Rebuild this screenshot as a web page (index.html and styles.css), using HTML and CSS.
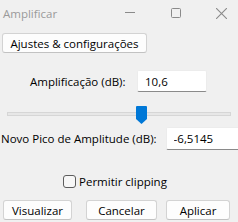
FILE: index.html
```html
<!DOCTYPE html>
<html lang="pt">
<head>
  <meta charset="UTF-8">
  <title>Amplificar</title>
  <link rel="stylesheet" href="styles.css">
</head>
<body>

  <div class="window">
    <div class="titlebar">
      <span class="title">Amplificar</span>
      <svg class="ctl ctl-min" viewBox="0 0 10 10"><path d="M0 5.5h10"/></svg>
      <svg class="ctl ctl-max" viewBox="0 0 10 10"><rect x="0.5" y="0.5" width="9" height="9" rx="1"/></svg>
      <svg class="ctl ctl-close" viewBox="0 0 10 10"><path d="M0 0l10 10M10 0L0 10"/></svg>
    </div>

    <div class="row-settings">
      <button class="btn btn-settings">Ajustes &amp; configurações</button>
    </div>

    <div class="row-amp">
      <label class="lbl">Amplificação (dB):</label>
      <input class="field field-amp" type="text" value="10,6">
    </div>

    <div class="slider">
      <div class="track"></div>
      <svg class="thumb" viewBox="0 0 11 18"><path d="M1 0h9a1 1 0 0 1 1 1v12l-5.5 5L0 13V1a1 1 0 0 1 1-1z"/></svg>
    </div>

    <div class="row-peak">
      <label class="lbl">Novo Pico de Amplitude (dB):</label>
      <input class="field field-peak" type="text" value="-6,5145">
    </div>

    <div class="row-check">
      <span class="checkbox"></span>
      <span class="lbl">Permitir clipping</span>
    </div>

    <div class="row-buttons">
      <button class="btn btn-preview">Visualizar</button>
      <button class="btn btn-cancel">Cancelar</button>
      <button class="btn btn-apply">Aplicar</button>
    </div>
  </div>

</body>
</html>
```

FILE: styles.css
```css
* { margin: 0; padding: 0; box-sizing: border-box; }
body {
  background: #f0f0f0;
  font-family: "Open Sans", "Noto Sans", sans-serif;
  font-size: 11.5px;
  color: #000;
  width: 238px;
  height: 222px;
  overflow: hidden;
}

/* TITLE BAR */
.titlebar {
  height: 26px;
  display: flex;
  align-items: center;
}
.title { color: #9a9a9a; font-size: 11.5px; padding-left: 3px; width: 125px; }
.ctl { stroke: #8a8a8a; stroke-width: 1; fill: none; }
.ctl-min { width: 10px; height: 10px; margin-top: -2px; }
.ctl-max { width: 10px; height: 10px; margin-left: 36px; }
.ctl-close { width: 11px; height: 11px; margin-left: 35px; }

/* BUTTONS */
.btn {
  font-family: inherit;
  font-size: 11.5px;
  color: #000;
  background: #fdfdfd;
  border: 1px solid #d3d3d3;
  border-bottom-color: #c2c2c2;
  border-radius: 3px;
  height: 20px;
}

.row-settings { padding-left: 2px; margin-top: 7px; }
.btn-settings { width: 145px; }

/* FIELDS */
.lbl { white-space: nowrap; }
.field {
  font-family: inherit;
  font-size: 11.5px;
  background: #fff;
  border: 1px solid #ececec;
  border-bottom-color: #8a8a8a;
  border-radius: 2px;
  height: 22px;
  padding-left: 7px;
}

.row-amp {
  display: flex;
  align-items: center;
  margin-top: 17px;
  padding-left: 30px;
}
.field-amp { width: 70px; margin-left: auto; margin-right: 31px; }

/* SLIDER */
.slider {
  position: relative;
  height: 18px;
  margin: 14px 7px 0 7px;
  display: flex;
  align-items: center;
}
.track {
  flex: 1;
  height: 4px;
  margin-top: -3px;
  background: #e7e7e7;
  border: 1px solid #d6d6d6;
}
.thumb {
  position: absolute;
  left: 129px;
  top: 0;
  width: 11px;
  height: 18px;
  fill: #0078d7;
}

.row-peak {
  display: flex;
  align-items: center;
  margin-top: 3px;
  padding-left: 1px;
}
.field-peak { width: 80px; height: 23px; margin-left: 9px; flex-shrink: 0; }

/* CHECKBOX */
.row-check {
  display: flex;
  align-items: center;
  margin-top: 24px;
  padding-left: 63px;
  height: 15px;
}
.checkbox {
  width: 13px;
  height: 13px;
  border: 1px solid #5d5d5d;
  border-radius: 3px;
  background: #f7f7f7;
  margin-right: 3px;
}

/* BOTTOM BUTTONS */
.row-buttons {
  display: flex;
  margin-top: 11px;
  padding-left: 3px;
}
.btn-preview { width: 69px; }
.btn-cancel { width: 71px; margin-left: 14px; }
.btn-apply { width: 64px; margin-left: 9px; }
```
